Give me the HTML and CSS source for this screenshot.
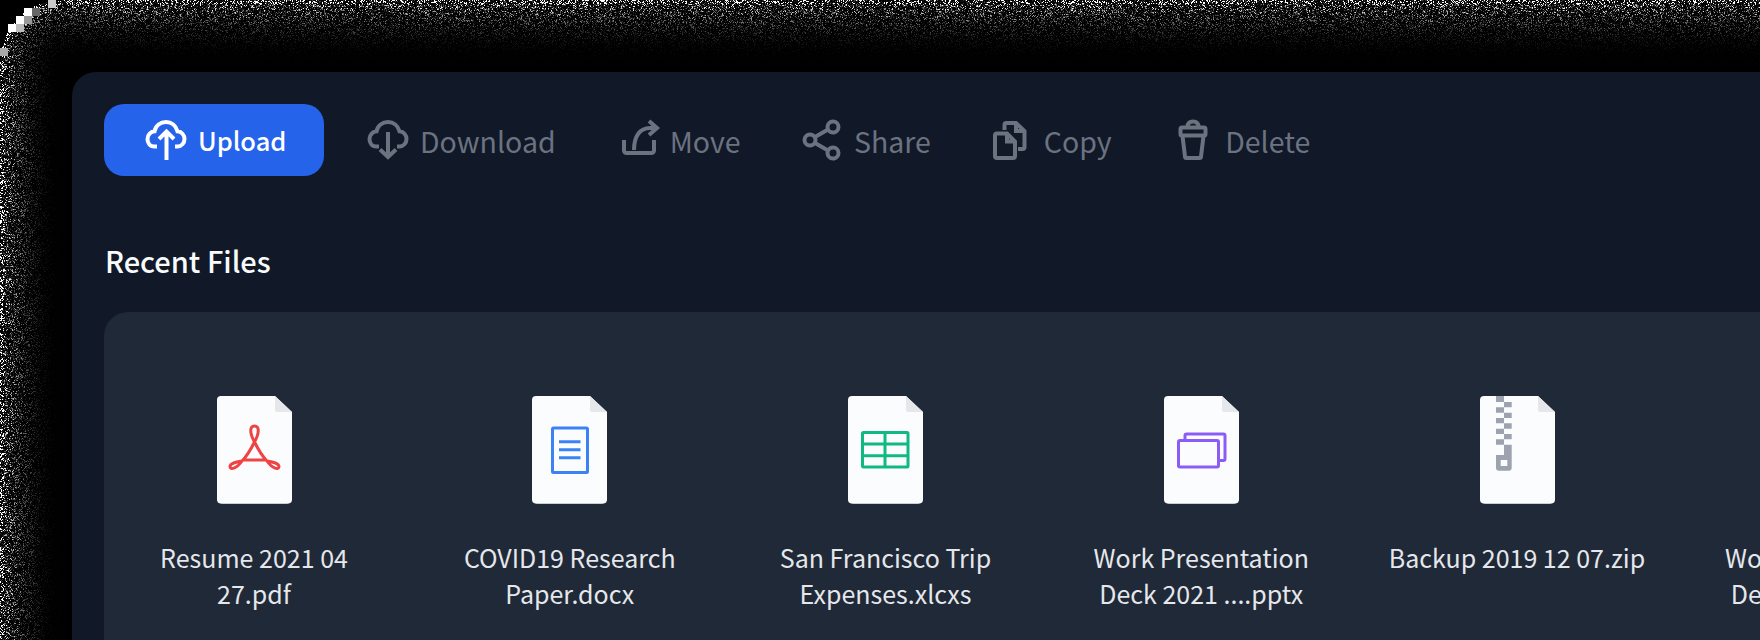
FILE: index.html
```html
<!DOCTYPE html>
<html lang="en">
<head>
    <meta charset="UTF-8">
    <meta name="viewport" content="width=device-width, initial-scale=1.0">
    <title>Recent Files</title>
    <link rel="stylesheet" href="styles.css">
</head>
<body>
    <canvas id="grain" class="grain" width="1760" height="640"></canvas>

    <svg class="defs" width="0" height="0">
        <symbol id="sheet" viewBox="0 0 75 108">
            <path fill="#9aa1ac" d="M2 100H73V104a4 4 0 0 1-4 4H6a4 4 0 0 1-4-4Z"/>
            <path fill="#fbfcfe" d="M4 0H58L75 16V103.5a4 4 0 0 1-4 4H4a4 4 0 0 1-4-4V4a4 4 0 0 1 4-4Z"/>
            <path fill="#e5e7eb" d="M58 0L75 16H60a2 2 0 0 1-2-2Z"/>
        </symbol>
        <symbol id="cloud" viewBox="0 0 48 48">
            <path d="M15 30.5H12.5C7.5 30.5 5.5 26.5 5.5 23C5.5 18.5 9 15.5 12.5 15.3C13.5 9.5 18.5 6 24 6C29.5 6 34 9.5 35.5 15.3C39.5 15.5 42.5 19 42.5 23C42.5 27 39.5 30.5 35.5 30.5H33"/>
        </symbol>
    </svg>

    <main class="window">
        <nav class="toolbar">
            <button class="tool tool-primary">
                <svg class="tool-icon" viewBox="0 0 48 48">
                    <use href="#cloud"/>
                    <path d="M24.5 44V16M17 23L24.5 15.5L32 23"/>
                </svg>
                <span>Upload</span>
            </button>
            <button class="tool">
                <svg class="tool-icon" viewBox="0 0 48 48">
                    <use href="#cloud"/>
                    <path d="M24 16V40M16 33.5L24 41L32 33.5"/>
                </svg>
                <span>Download</span>
            </button>
            <button class="tool tool-move">
                <svg class="tool-icon" viewBox="0 0 48 48">
                    <path d="M8 24V34.5A2.5 2.5 0 0 0 10.5 37H35.5A2.5 2.5 0 0 0 38 34.5V24"/>
                    <path d="M18 34C18 20 24 12 34 12H40M33 5L41 12L33 19"/>
                </svg>
                <span>Move</span>
            </button>
            <button class="tool tool-share">
                <svg class="tool-icon" viewBox="0 0 48 48">
                    <circle cx="34" cy="11" r="5.5"/>
                    <circle cx="11" cy="24" r="5.5"/>
                    <circle cx="34" cy="37" r="5.5"/>
                    <path d="M16 21L29 13.5M16 27L29 34.5"/>
                </svg>
                <span>Share</span>
            </button>
            <button class="tool tool-copy">
                <svg class="tool-icon" viewBox="0 0 48 48">
                    <path d="M12 17.5H22L30 25.5V40A2 2 0 0 1 28 42H12A2 2 0 0 1 10 40V19.5A2 2 0 0 1 12 17.5ZM22 18V25.5H30"/>
                    <path d="M19.5 14V9A2 2 0 0 1 21.5 7H31L39.5 15V31A2 2 0 0 1 37.5 33H33M31 7V15H39.5"/>
                </svg>
                <span>Copy</span>
            </button>
            <button class="tool tool-delete">
                <svg class="tool-icon" viewBox="0 0 48 48">
                    <rect x="11.5" y="11.5" width="25" height="8" rx="1.5"/>
                    <path d="M18.5 11C18.5 7 21 5.5 24 5.5C27 5.5 29.5 7 29.5 11"/>
                    <path d="M13.5 20L16 40.5A1.5 1.5 0 0 0 17.5 42H30.5A1.5 1.5 0 0 0 32 40.5L34.5 20"/>
                </svg>
                <span>Delete</span>
            </button>
        </nav>

        <h2 class="section-title">Recent Files</h2>

        <section class="files">
            <div class="file">
                <svg class="doc doc-red" viewBox="0 0 75 108">
                    <use href="#sheet" width="75" height="108"/>
                    <path d="M37.5 46C33 38 32 30 37.5 30C43 30 42 38 37.5 46C34 53 30 60 25 65C19 66 13 67 13 70.5C13 74 19.5 73 25 65M37.5 46C41 53 45 60 50 65C56 66 62 67 62 70.5C62 74 55.5 73 50 65M25 64H50"/>
                </svg>
                <p class="file-name">Resume 2021 04 27.pdf</p>
            </div>
            <div class="file">
                <svg class="doc doc-blue" viewBox="0 0 75 108">
                    <use href="#sheet" width="75" height="108"/>
                    <rect x="20.5" y="32" width="35" height="44.5" rx="1"/>
                    <path d="M27 45.7H48.5M27 53.7H48.5M27 61.7H48.5"/>
                </svg>
                <p class="file-name">COVID19 Research Paper.docx</p>
            </div>
            <div class="file">
                <svg class="doc doc-green" viewBox="0 0 75 108">
                    <use href="#sheet" width="75" height="108"/>
                    <rect x="14.5" y="36.5" width="45.5" height="34.5" rx="1"/>
                    <path d="M37 36.5V71M14.5 48H60M14.5 59.7H60"/>
                </svg>
                <p class="file-name">San Francisco Trip Expenses.xlcxs</p>
            </div>
            <div class="file">
                <svg class="doc doc-purple" viewBox="0 0 75 108">
                    <use href="#sheet" width="75" height="108"/>
                    <rect x="14.5" y="44.5" width="40" height="26.5" rx="1.5"/>
                    <path d="M21 44V39.5A1.5 1.5 0 0 1 22.5 38H59.5A1.5 1.5 0 0 1 61 39.5V63A1.5 1.5 0 0 1 59.5 64.5H55"/>
                </svg>
                <p class="file-name">Work Presentation Deck 2021 ....pptx</p>
            </div>
            <div class="file">
                <svg class="doc" viewBox="0 0 75 108">
                    <use href="#sheet" width="75" height="108"/>
                    <path fill="#9ca3af" d="M16 0h8v6h-8ZM24 6h7.7v5.3h-7.7ZM16 11.3h8v5.4h-8ZM24 16.7h7.7v5.3h-7.7ZM16 22h8v5.3h-8ZM24 27.3h7.7v5.4h-7.7ZM16 32.7h8v5.3h-8ZM24 38h7.7v5.3h-7.7ZM16 43.3h8v5.4h-8ZM24 48.7h7.7v5.3h-7.7Z"/>
                    <path fill="#9ca3af" d="M24 54h7.7v17.7a3 3 0 0 1-3 3H19a3 3 0 0 1-3-3V59h8Z"/>
                    <rect fill="#fbfcfe" x="20.7" y="64" width="6.6" height="6"/>
                </svg>
                <p class="file-name">Backup 2019 12 07.zip</p>
            </div>
            <div class="file">
                <svg class="doc doc-purple" viewBox="0 0 75 108">
                    <use href="#sheet" width="75" height="108"/>
                </svg>
                <p class="file-name">Work Presentation Deck 2021 ....pptx</p>
            </div>
        </section>
    </main>

    <script src="grain.js"></script>
</body>
</html>
```

FILE: styles.css
```css
/* Dark file manager card, cut off by the window on the right and bottom */
html, body {
    margin: 0;
    height: 640px;
    overflow: hidden;
    background-color: #000;
}
body {
    position: relative;
    padding: 72px 0 0 72px;
    box-sizing: border-box;
    font-family: "Noto Sans CJK JP", "Noto Sans", sans-serif;
}
.grain {
    position: absolute;
    top: 0;
    left: 0;
}
.defs {
    position: absolute;
}
.window {
    position: relative;
    width: 1688px;
    height: 568px;
    overflow: hidden;
    padding: 32px 0 0 32px;
    box-sizing: border-box;
    background-color: #111827;
    border-radius: 24px 0 0 0;
}

/* Toolbar */
.toolbar {
    display: flex;
    align-items: center;
    gap: 54px;
}
.tool {
    display: flex;
    align-items: center;
    gap: 8px;
    padding: 0;
    border: none;
    background: none;
    color: #6b7280;
    font-family: inherit;
    font-size: 28.5px;
    line-height: 48px;
}
.tool span {
    padding-top: 2px;
}
.tool-icon {
    width: 48px;
    height: 48px;
    flex: none;
    fill: none;
    stroke: currentColor;
    stroke-width: 4;
}
.tool-primary {
    width: 220px;
    height: 72px;
    padding: 0 0 0 38px;
    margin-right: -14px;
    border-radius: 20px;
    background-color: #2563eb;
    color: #fff;
    font-size: 25.5px;
    font-weight: 500;
}
.tool-primary span {
    padding-top: 0;
}
.tool-move {
    margin-left: 6px;
    gap: 6px;
}
.tool-share {
    margin-left: 4.5px;
    gap: 7px;
}
.tool-copy {
    gap: 11px;
}
.tool-delete {
    margin-left: 3.5px;
}

.section-title {
    margin: 62px 0 0 1px;
    color: #f9fafb;
    font-size: 29px;
    font-weight: 500;
    line-height: 44px;
}

/* Recent files */
.files {
    display: grid;
    grid-template-columns: repeat(6, 260px);
    column-gap: 55.75px;
    margin-top: 30px;
    padding: 84px 0 0 20px;
    background-color: #1f2937;
    border-radius: 24px 0 0 0;
    height: 400px;
}
.file {
    display: flex;
    flex-direction: column;
    align-items: center;
}
.doc {
    width: 75px;
    height: 108px;
    fill: none;
    stroke-width: 3;
}
.doc use, .doc path[fill], .doc rect[fill] {
    stroke: none;
}
.doc-red { stroke: #ef4444; }
.doc-blue { stroke: #3b82f6; }
.doc-green { stroke: #10b981; }
.doc-purple { stroke: #8b5cf6; }
.file-name {
    margin: 35px 0 0 0;
    color: #e5e7eb;
    font-size: 25px;
    line-height: 36px;
    text-align: center;
}
```

FILE: grain.js
```js
// Dithered speckle left around the card, brightest at the outer edge
const canvas = document.getElementById('grain');
const ctx = canvas.getContext('2d');
const image = ctx.createImageData(canvas.width, canvas.height);

let seed = 12345;
function rand() {
    seed = (seed * 1664525 + 1013904223) % 4294967296;
    return seed / 4294967296;
}

const radius = 60;
for (let y = 0; y < canvas.height; y++) {
    for (let x = 0; x < canvas.width; x++) {
        const i = (y * canvas.width + x) * 4;
        let depth = Math.min(x, y);
        if (x < radius && y < radius) {
            depth = radius - Math.hypot(radius - x, radius - y);
        }
        let value = 0;
        if (depth >= 0 && depth < 72) {
            const r = rand();
            const level = Math.pow(1 - depth / 72, 3);
            value = 255 * Math.min(1, Math.pow(r, 5) * level * 1.5);
            if (depth < 4 && r > 0.75) {
                value = 255;
            }
        }
        image.data[i] = value;
        image.data[i + 1] = value;
        image.data[i + 2] = value;
        image.data[i + 3] = 255;
    }
}
ctx.putImageData(image, 0, 0);

// Coarse blocks on the rounded corner
const blocks = [
    [48, 0, '#ccc'], [24, 8, '#fff'], [32, 8, '#666'], [16, 16, '#fff'],
    [24, 16, '#999'], [8, 24, '#fff'], [16, 24, '#bbb'], [0, 48, '#aaa']
];
blocks.forEach(([x, y, color]) => {
    ctx.fillStyle = color;
    ctx.fillRect(x, y, 8, 8);
});
```
